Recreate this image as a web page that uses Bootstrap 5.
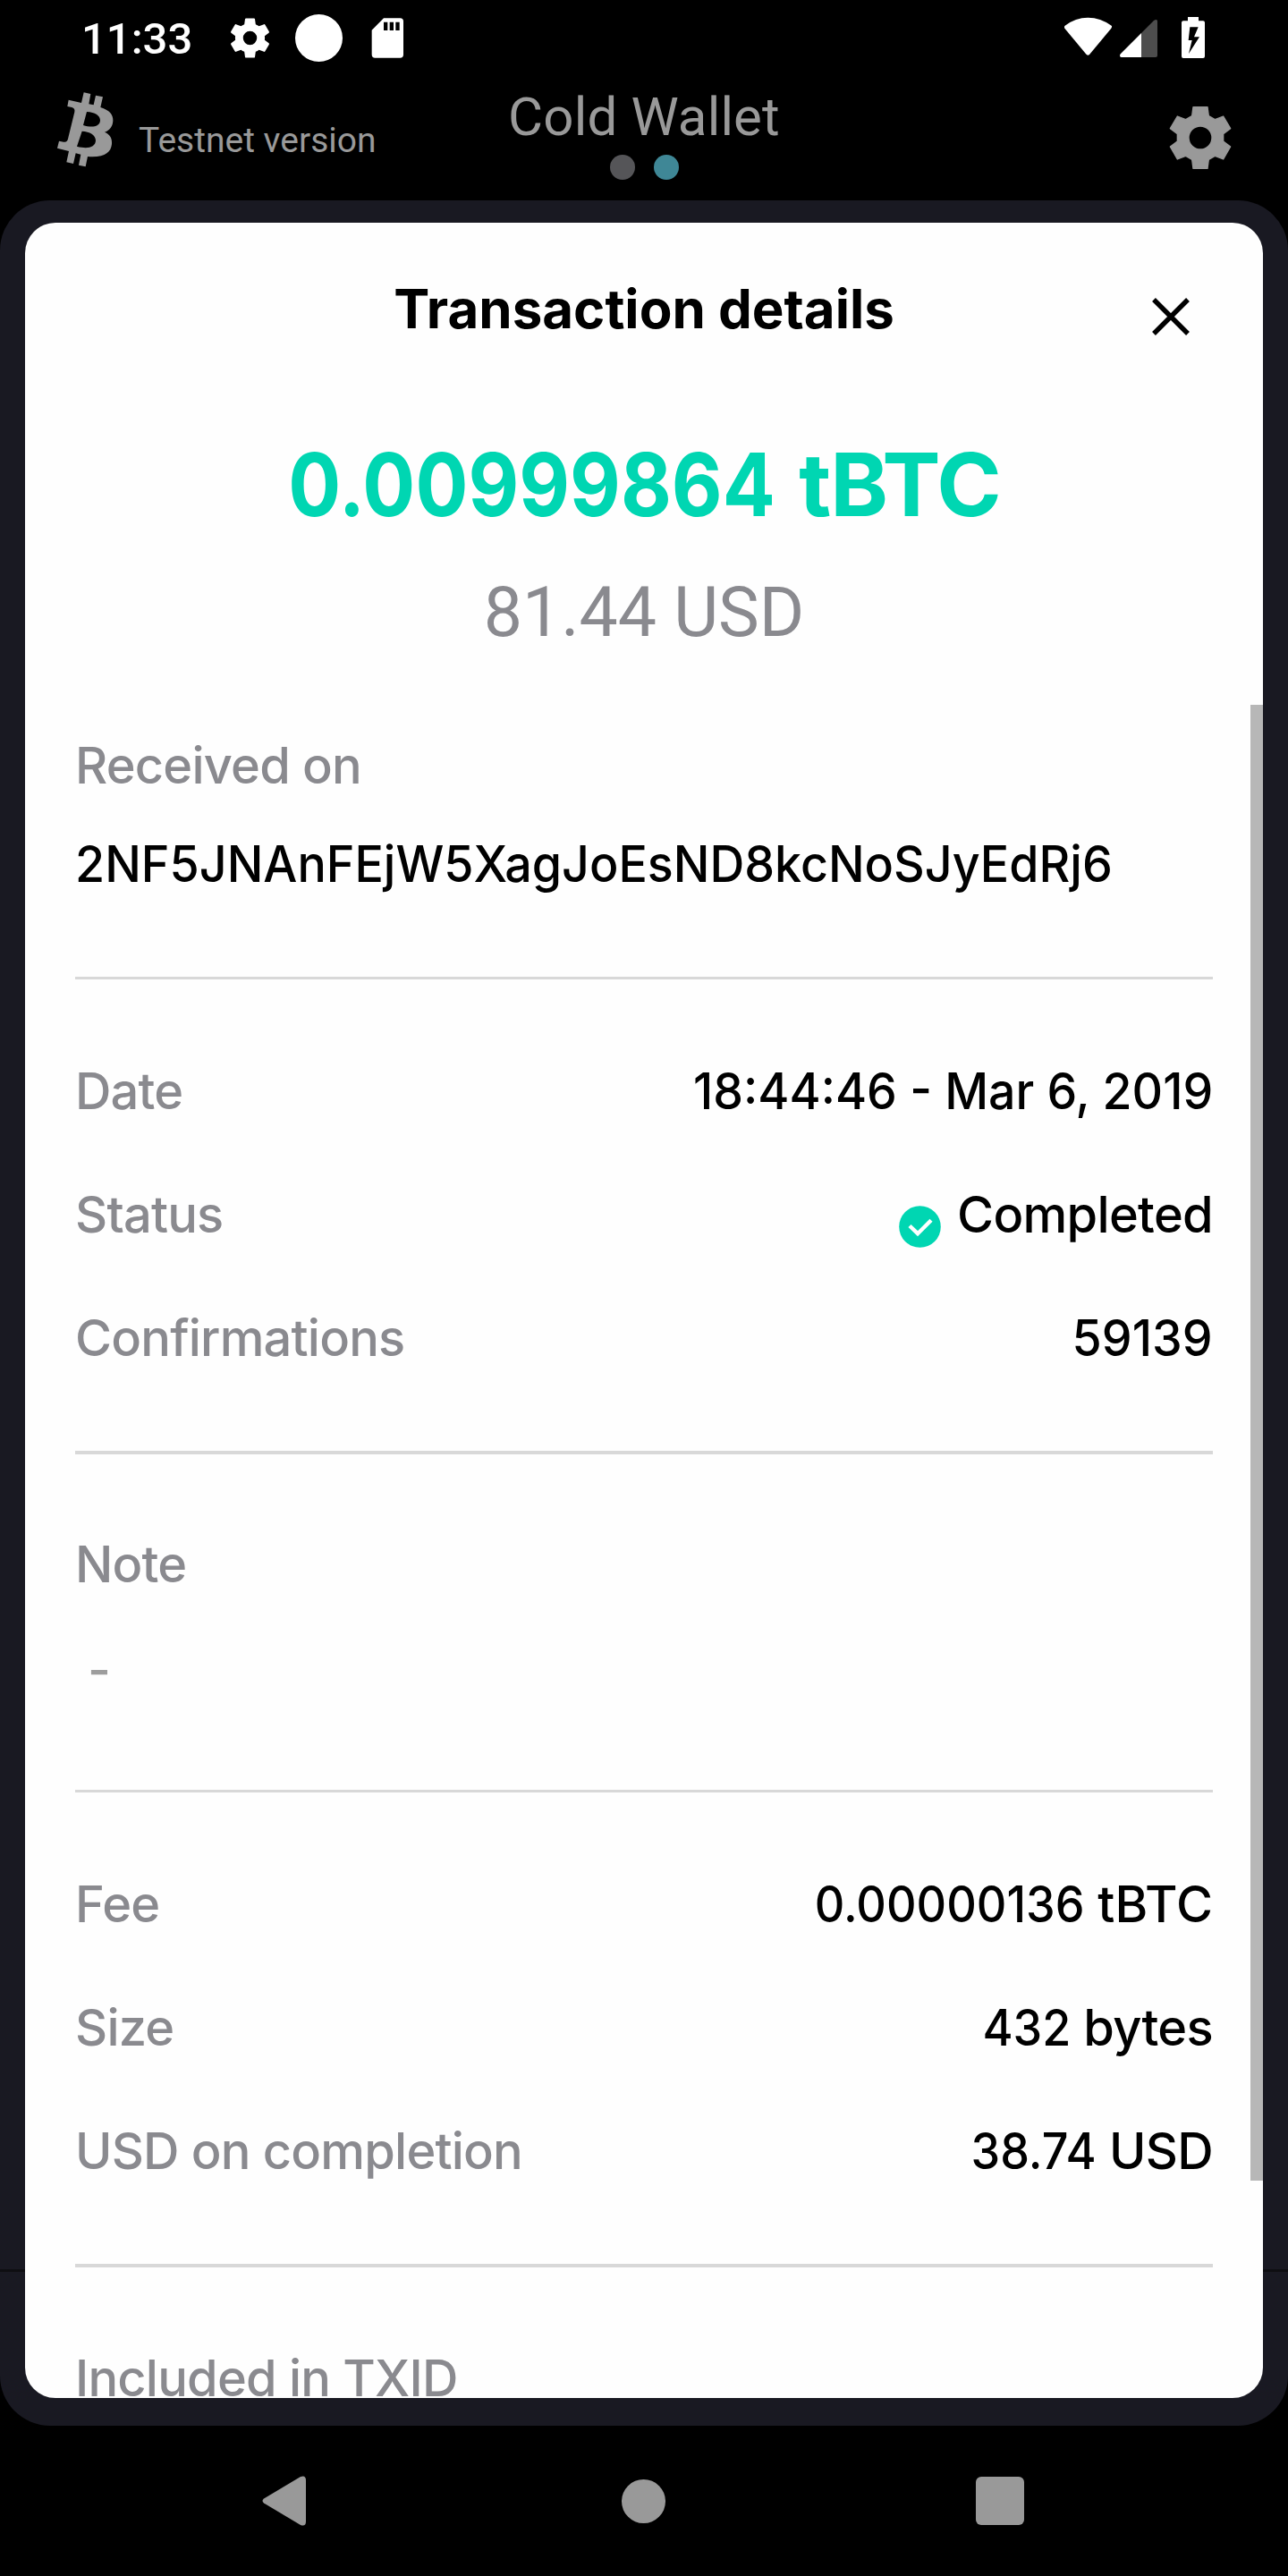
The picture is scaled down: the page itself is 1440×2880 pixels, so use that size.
<!DOCTYPE html>
<html lang="en">
<head>
<meta charset="utf-8">
<title>Cold Wallet - Transaction details</title>
<meta name="viewport" content="width=device-width, initial-scale=1">
<link href="https://cdn.jsdelivr.net/npm/bootstrap@5.3.0/dist/css/bootstrap.min.css" rel="stylesheet">
<style>
  body { background: #000; font-family: Inter, "Liberation Sans", sans-serif; color: #000; }
  svg { display: block; flex: none; }
  .phone { width: 1440px; height: 2880px; overflow: hidden; background: #000; }

  .status-bar { height: 84px; padding: 0 93px 0 91px; color: #fff; font-family: Roboto, sans-serif; }
  .clock { font-size: 49px; font-weight: 500; line-height: 58px; padding-top: 15px; width: 162px; }
  .sb-gear { margin-top: 16px; }
  .sb-circle { width: 53px; height: 53px; margin: 16px 32px 0 24px; }
  .sb-card { margin-top: 20px; }
  .sb-right { margin-top: 19px; }

  .app-header { height: 140px; display: grid; grid-template-columns: 1fr auto 1fr; align-items: start; padding: 0 63px; color: #999; font-family: Roboto, sans-serif; }
  .btc-logo { margin-top: 18px; }
  .gear { margin-top: 34px; }
  .net-label { font-size: 39px; line-height: 46px; margin: 50px 0 0 28px; white-space: nowrap; }
  .wallet-title { font-size: 60px; line-height: 70px; font-weight: 400; letter-spacing: .15px; margin: 12px 0 7px; }
  .pager { gap: 21px; padding-left: 2px; }
  .pager-dot { width: 28px; height: 28px; border-radius: 50%; background: #555558; }
  .pager-dot.is-active { background: #3f8796; }

  .panel { height: 2488px; padding: 25px 28px 31px; border-radius: 56px; background: #191922; }
  .panel::before { content: ""; position: absolute; left: 0; right: 0; top: 2313px; height: 3px; background: #0e0e12; }
  .sheet { height: 2432px; border-radius: 34px; background: #fefefe; }
  .sheet-head { flex: none; display: grid; grid-template-columns: 1fr auto 1fr; padding: 60px 82px 0; height: 133px; }
  .sheet-title { font-size: 60px; line-height: 72px; font-weight: 700; }
  .close-btn { padding: 0; border: 0; background: none; margin-top: 24px; height: 42px; }
  .amount { margin-top: 100px; font-size: 98px; line-height: 120px; font-weight: 700; letter-spacing: -1.2px; word-spacing: 4px; color: #00d6b2; white-space: pre; }
  .amount .digits { transform: scaleX(.893); margin-left: -64px; }
  .fiat { margin: 38px 0 58px; font-family: Roboto, sans-serif; font-size: 77px; line-height: 90px; color: #8a8a8f; }

  .scroll-area { min-height: 0; }
  .details { padding: 34px 56px 0; font-size: 56px; line-height: 68px; font-weight: 500; white-space: nowrap; }
  .details section { border-bottom: 3px solid #d8d8d8; padding: 91px 0 92px; display: flex; flex-direction: column; gap: 70px; }
  .details section.first-block { padding-top: 0; gap: 42px; }
  .details section.thick { border-bottom-width: 4px; }
  .details section.note-block { padding: 89px 0 100px; gap: 50px; }
  .details section.last-block { padding-top: 90px; border: 0; }
  .lbl { color: #8a8a8f; letter-spacing: -.8px; }
  .val { white-space: pre; }
  .word { letter-spacing: -.7px; }
  /* condensed numerals, anchored to the text that follows them */
  .digits { display: inline-block; transform: scaleX(.93); transform-origin: right center; letter-spacing: 0; }
  .digits-wide { transform: scaleX(.96); }
  .date-val { transform: scaleX(.957); transform-origin: right center; }
  .address { transform: scaleX(.96); transform-origin: left center; }
  .note-text { color: #9d9d9d; padding-left: 14px; }
  .scroll-thumb { right: 0; top: 0; width: 14px; height: 1650px; background: #b7b7b7; }
  .check { margin: 24px 18px -3px 0; }

  .nav-keys { height: 168px; padding-left: 293px; }
  .key-home { margin-left: 353px; }
  .key-recent { margin-left: 347px; }
</style>
</head>
<body>
<div class="phone d-flex flex-column">
  <div class="status-bar d-flex align-items-start">
    <div class="clock">11:33</div>
    <svg class="sb-gear" width="53" height="53" viewBox="0 0 24 24" fill="#fff"><path d="M19.43 12.98c.04-.32.07-.64.07-.98s-.03-.66-.07-.98l2.11-1.65c.19-.15.24-.42.12-.64l-2-3.46c-.12-.22-.39-.3-.61-.22l-2.49 1c-.52-.4-1.08-.73-1.69-.98l-.38-2.65A.49.49 0 0 0 14 2h-4c-.25 0-.46.18-.49.42l-.38 2.65c-.61.25-1.17.59-1.69.98l-2.49-1c-.23-.09-.49 0-.61.22l-2 3.46c-.13.22-.07.49.12.64l2.11 1.65c-.04.32-.07.65-.07.98s.03.66.07.98l-2.11 1.65c-.19.15-.24.42-.12.64l2 3.46c.12.22.39.3.61.22l2.49-1c.52.4 1.08.73 1.69.98l.38 2.65c.03.24.24.42.49.42h4c.25 0 .46-.18.49-.42l.38-2.65c.61-.25 1.17-.59 1.69-.98l2.49 1c.23.09.49 0 .61-.22l2-3.46c.12-.22.07-.49-.12-.64l-2.11-1.65zM12 15.5a3.5 3.5 0 1 1 0-7 3.5 3.5 0 0 1 0 7z"/></svg>
    <div class="sb-circle rounded-circle bg-white"></div>
    <svg class="sb-card" width="38" height="46" viewBox="1245 59 114 138"><path fill="#fff" d="M1287 60H1342Q1353 60 1353 71V182Q1353 193 1342 193H1258Q1247 193 1247 182V100Z"/><path d="M1287 73h13v28h-13zM1307 73h13v28h-13zM1327 73h13v28h-13z"/></svg>
    <svg class="sb-right ms-auto" width="157" height="47" viewBox="150 57 471 141"><g fill="#fff"><path d="M152 86Q187 59 229 59T308 86Q311 90 307 95L234 183Q229 188 224 183L151 95Q148 90 152 86Z"/><path fill="#4d4d4d" d="M408 111L450 69Q454 66 458 66Q462 66 462 71V186Q462 192 456 192H408Z"/><path d="M408 111V192H341Q336 192 336 186Q336 183 339 180Z"/><path d="M564 57H600V70H615Q621 70 621 76V189Q621 195 615 195H549Q543 195 543 189V76Q543 70 549 70H564Z"/></g><path d="M571 91H599L585 124H603L567 180L578 135H566Z"/></svg>
  </div>

  <header class="app-header">
    <div class="d-flex align-items-start">
      <svg class="btc-logo" width="64" height="86" viewBox="188 306 192 258"><path fill="#999" fill-rule="evenodd" d="M229 335L272 345L280 310L303 315L297 349L313 352L320 320L344 325L336 360C366 370 379 384 378 405C377 424 367 438 350 443C368 450 376 465 374 483C371 512 350 529 293 525L286 559L263 554L270 518L253 514L245 549L222 544L230 507L191 497L197 473L212 476C221 478 225 474 227 466L249 376C251 367 247 362 240 360L225 357ZM290 375L278 420C306 429 333 426 335 405C336 388 318 376 290 375ZM274 440L257 491C290 500 319 496 320 471C320 453 300 441 274 440Z"/></svg>
      <div class="net-label">Testnet version</div>
    </div>
    <div class="text-center">
      <h1 class="wallet-title">Cold Wallet</h1>
      <div class="pager d-flex justify-content-center"><span class="pager-dot"></span><span class="pager-dot is-active"></span></div>
    </div>
    <svg class="gear ms-auto" width="70" height="72" viewBox="501 354 210 216"><path fill="#999" fill-rule="evenodd" stroke="#999" stroke-width="4" stroke-linejoin="round" d="M582 359H630L634 389L655 401L683 390L707 431L683 449V474L707 492L683 534L655 523L634 535L630 565H582L578 535L557 523L529 534L505 492L529 474V449L505 431L529 390L557 401L578 389ZM606 423A39 39 0 1 0 606 501A39 39 0 1 0 606 423Z"/></svg>
  </header>

  <main class="panel position-relative">
    <div class="sheet position-relative overflow-hidden d-flex flex-column">
      <div class="sheet-head">
        <span></span>
        <h2 class="sheet-title m-0">Transaction details</h2>
        <button class="close-btn ms-auto" type="button" aria-label="Close"><svg width="42" height="42" viewBox="0 0 42 42" stroke="#000" stroke-width="5.4"><path d="M2 2L40 40M40 2L2 40"/></svg></button>
      </div>
      <div class="amount text-center"><span class="digits">0.00999864</span> tBTC</div>
      <div class="fiat text-center">81.44 USD</div>

      <div class="scroll-area position-relative flex-fill overflow-hidden">
        <div class="details">
          <section class="first-block">
            <div class="lbl">Received on</div>
            <div class="address">2NF5JNAnFEjW5XagJoEsND8kcNoSJyEdRj6</div>
          </section>
          <section class="thick">
            <div class="d-flex justify-content-between"><span class="lbl">Date</span><span class="date-val">18:44:46 - Mar 6, 2019</span></div>
            <div class="d-flex justify-content-between"><span class="lbl">Status</span>
              <span class="d-flex align-items-start word"><svg class="check" width="47" height="47" viewBox="0 0 47 47"><circle cx="23.5" cy="23.5" r="23.3" fill="#00d6b2"/><path d="M12 22.5L21 31.2L36 16.3" fill="none" stroke="#fff" stroke-width="4.4"/></svg>Completed</span></div>
            <div class="d-flex justify-content-between"><span class="lbl">Confirmations</span><span class="val"><span class="digits digits-wide">59139</span></span></div>
          </section>
          <section class="note-block">
            <div class="lbl">Note</div>
            <div class="note-text">-</div>
          </section>
          <section class="thick">
            <div class="d-flex justify-content-between"><span class="lbl">Fee</span><span class="val"><span class="digits">0.00000136</span> tBTC</span></div>
            <div class="d-flex justify-content-between"><span class="lbl">Size</span><span class="val word"><span class="digits">432</span> bytes</span></div>
            <div class="d-flex justify-content-between"><span class="lbl">USD on completion</span><span class="val word"><span class="digits">38.74</span> USD</span></div>
          </section>
          <section class="last-block">
            <div class="lbl">Included in TXID</div>
          </section>
        </div>
        <div class="scroll-thumb position-absolute"></div>
      </div>
    </div>
  </main>

  <nav class="nav-keys d-flex align-items-center">
    <svg width="49" height="56" viewBox="0 0 49 56"><path fill="#999" d="M2 25.5L43 1Q49 -1 49 5V51Q49 57 43 55L2 30.5Q-1 28 2 25.5Z"/></svg>
    <svg class="key-home" width="49" height="49" viewBox="0 0 49 49"><circle cx="24.5" cy="24.5" r="24.5" fill="#999"/></svg>
    <svg class="key-recent" width="54" height="54" viewBox="0 0 54 54"><rect width="54" height="54" rx="6" fill="#999"/></svg>
  </nav>
</div>
<script src="https://cdn.jsdelivr.net/npm/bootstrap@5.3.0/dist/js/bootstrap.bundle.min.js"></script>
</body>
</html>
